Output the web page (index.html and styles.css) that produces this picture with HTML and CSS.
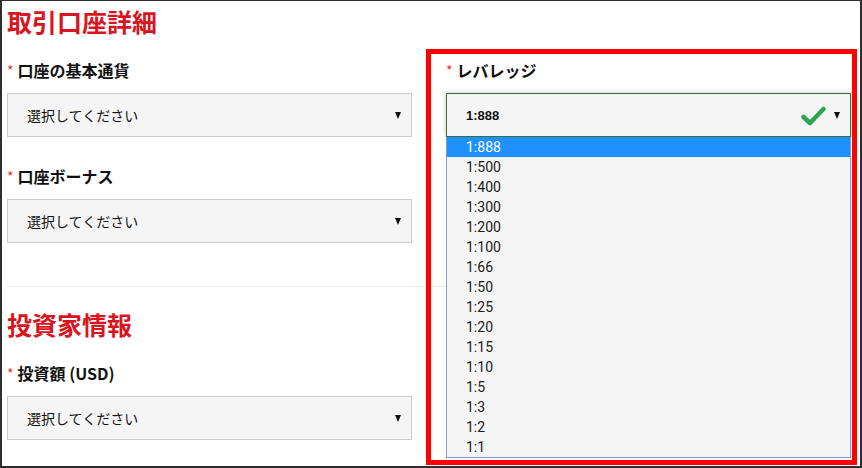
FILE: index.html
```html
<!DOCTYPE html>
<html lang="ja">
<head>
    <meta charset="UTF-8">
    <meta name="viewport" content="width=device-width, initial-scale=1.0">
    <title>取引口座詳細</title>
    <link rel="stylesheet" href="styles.css">
</head>
<body>
    <div class="page">
        <h2 class="section-title">取引口座詳細</h2>
        <div class="form-grid">
            <div class="column">
                <div class="field">
                    <label><span class="req">*</span>口座の基本通貨</label>
                    <div class="select"><span>選択してください</span><i class="arrow"></i></div>
                </div>
                <div class="field">
                    <label><span class="req">*</span>口座ボーナス</label>
                    <div class="select"><span>選択してください</span><i class="arrow"></i></div>
                </div>
            </div>
            <div class="column">
                <div class="field">
                    <label><span class="req">*</span>レバレッジ</label>
                    <div class="select-wrap">
                        <div class="select valid">
                            <span class="value">1:888</span>
                            <svg class="check" width="25" height="20" viewBox="0 0 25 20">
                                <path d="M2.5 11 L9 17 L22.5 3" fill="none" stroke="#2ea44f" stroke-width="4.5" stroke-linecap="round" stroke-linejoin="round"/>
                            </svg>
                            <i class="arrow"></i>
                        </div>
                        <ul class="options">
                            <li class="active">1:888</li>
                            <li>1:500</li>
                            <li>1:400</li>
                            <li>1:300</li>
                            <li>1:200</li>
                            <li>1:100</li>
                            <li>1:66</li>
                            <li>1:50</li>
                            <li>1:25</li>
                            <li>1:20</li>
                            <li>1:15</li>
                            <li>1:10</li>
                            <li>1:5</li>
                            <li>1:3</li>
                            <li>1:2</li>
                            <li>1:1</li>
                        </ul>
                    </div>
                </div>
            </div>
        </div>

        <hr class="divider">

        <h2 class="section-title">投資家情報</h2>
        <div class="form-grid">
            <div class="column">
                <div class="field">
                    <label><span class="req">*</span>投資額 (USD)</label>
                    <div class="select"><span>選択してください</span><i class="arrow"></i></div>
                </div>
            </div>
            <div class="column"></div>
        </div>

        <!-- highlight frame around the leverage field -->
        <div class="highlight"></div>
    </div>
</body>
</html>
```

FILE: styles.css
```css
body {
    margin: 0;
    padding: 0;
    background-color: #fff;
    font-family: "Noto Sans CJK JP", "Liberation Sans", sans-serif;
    color: #111;
}

.page {
    position: relative;
    width: 862px;
    height: 468px;
    box-sizing: border-box;
    border: 2px solid #2e2e2e;
    border-top-width: 1px;
    padding: 4px 9px 0 5px;
    overflow: hidden;
}

.section-title {
    margin: 0 0 22px 0;
    font-size: 25px;
    line-height: 32px;
    font-weight: bold;
    color: #d7161f;
}

.form-grid {
    display: grid;
    grid-template-columns: 405px 405px;
    column-gap: 34px;
}

.field {
    margin-bottom: 28px;
}

.field label {
    display: block;
    font-size: 16px;
    line-height: 22px;
    font-weight: bold;
    margin-bottom: 12px;
}

.req {
    color: #e0352b;
    font-size: 14px;
    font-weight: normal;
    margin-right: 4px;
    vertical-align: 1px;
}

/* Fake select box */
.select {
    display: flex;
    align-items: center;
    height: 44px;
    box-sizing: border-box;
    padding: 0 10px 0 19px;
    background-color: #f5f5f5;
    border: 1px solid #cbcbcb;
    font-size: 14px;
}

.select span {
    flex: 1;
}

.arrow {
    width: 0;
    height: 0;
    border-left: 3.5px solid transparent;
    border-right: 3.5px solid transparent;
    border-top: 7px solid #111;
}

.select.valid {
    border-color: #3c6e3c;
    box-shadow: 0 0 5px rgba(60, 118, 61, 0.35);
}

.select .value {
    font-family: "Liberation Sans", Arial, sans-serif;
    font-weight: bold;
    font-size: 13px;
}

.check {
    margin-right: 8px;
    margin-top: 1px;
}

.select-wrap {
    position: relative;
}

/* Open option list */
.options {
    position: absolute;
    top: 100%;
    left: 0;
    right: 0;
    z-index: 5;
    margin: 0;
    padding: 0;
    list-style: none;
    background-color: #f5f5f5;
    border: 1px solid #7f9ccb;
    border-top: none;
    font-family: Roboto, "Liberation Sans", sans-serif;
    font-size: 14px;
}

.options li {
    height: 20px;
    line-height: 20px;
    padding-left: 19px;
    color: #1a1a1a;
}

.options li.active {
    background-color: #1e90ff;
    color: #fff;
}

.divider {
    margin: 15px 0 21px 0;
    border: none;
    border-top: 1px solid #e9e9e9;
}

.highlight {
    position: absolute;
    left: 424px;
    top: 48px;
    width: 431px;
    height: 416px;
    box-sizing: border-box;
    border: 5px solid #ff0000;
    z-index: 10;
    pointer-events: none;
}
```
